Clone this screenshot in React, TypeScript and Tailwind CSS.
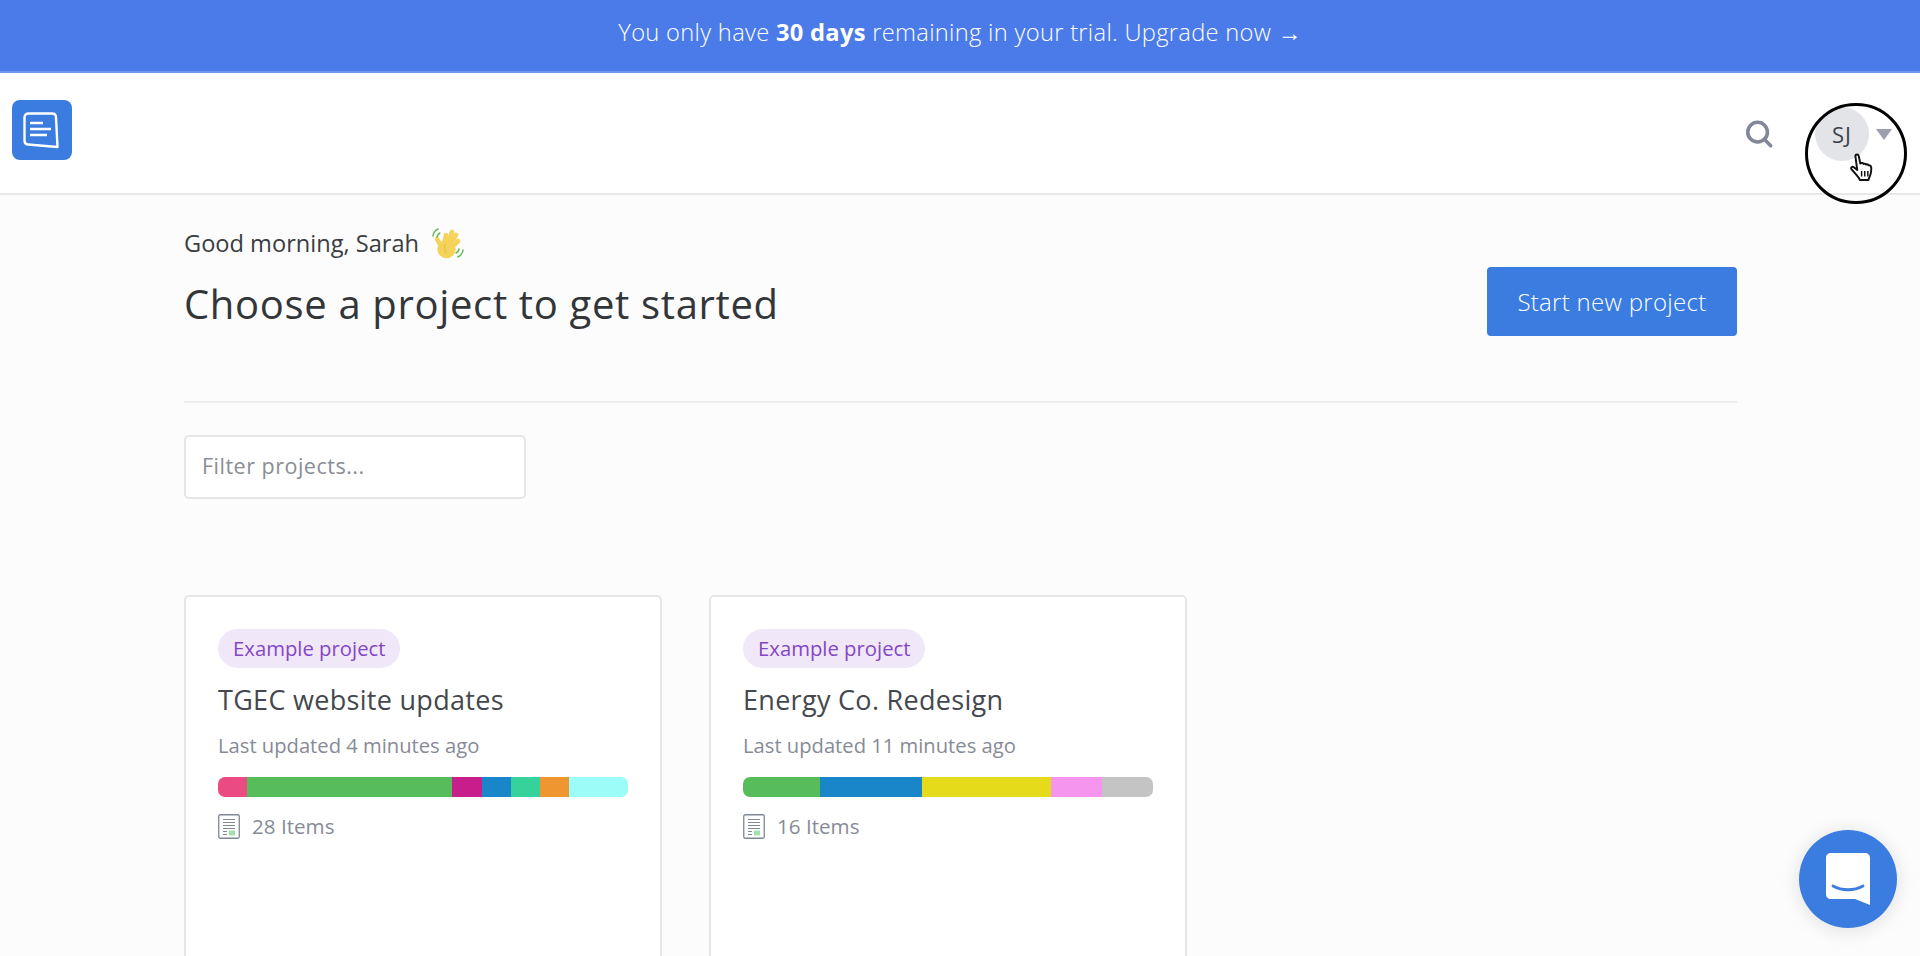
import React from 'react';

const projects = [
  {
    name: 'TGEC website updates',
    updated: 'Last updated 4 minutes ago',
    items: 28,
    segments: [
      { color: 'bg-[#ec4a82]', count: 2 },
      { color: 'bg-[#57bd5a]', count: 14 },
      { color: 'bg-[#c71e8c]', count: 2 },
      { color: 'bg-[#1886c8]', count: 2 },
      { color: 'bg-[#35d39b]', count: 2 },
      { color: 'bg-[#ef9630]', count: 2 },
      { color: 'bg-[#9cfdf8]', count: 4 },
    ],
  },
  {
    name: 'Energy Co. Redesign',
    updated: 'Last updated 11 minutes ago',
    items: 16,
    segments: [
      { color: 'bg-[#57bd5a]', count: 3 },
      { color: 'bg-[#1886c8]', count: 4 },
      { color: 'bg-[#e6db1a]', count: 5 },
      { color: 'bg-[#f595ee]', count: 2 },
      { color: 'bg-[#c4c4c4]', count: 2 },
    ],
  },
];

function Logo() {
  return (
    <div className="flex h-[60px] w-[60px] items-center justify-center rounded-lg bg-[#3b7ce0]">
      <svg width="40" height="40" viewBox="0 0 40 40" fill="none">
        <path
          d="M6 3.500h24c2.500 0 4 1.500 4 4l1.500 29.500-29.500-2.500c-2.200-.2-3.500-1.700-3.500-4v-23c0-2.500 1.500-4 4-4z"
          stroke="#fff"
          strokeWidth="2.400"
          strokeLinejoin="round"
        />
        <path d="M8 13h13M8 19h21M8 25h17" stroke="#fff" strokeWidth="2.600" />
      </svg>
    </div>
  );
}

function WaveEmoji() {
  return (
    <svg width="34" height="34" viewBox="0 0 34 34" fill="none">
      <g stroke="#f5d35a" strokeWidth="4.600" strokeLinecap="round">
        <path d="M11 22l-5-9" />
        <path d="M13 19l2-10" />
        <path d="M16 19l5-13" />
        <path d="M18 20l7-11" />
        <path d="M20 22l7-7" />
      </g>
      <circle cx="15.500" cy="23" r="9.200" fill="#f5d35a" />
      <path d="M14 18c-1 3-.5 6 1 9" stroke="#e8b93f" strokeWidth="1" />
      <path d="M2 10c.3-3 2-5.500 5-7M6 11c.3-1.700 1.200-3 2.800-4" stroke="#6cb85c" strokeWidth="1.600" strokeLinecap="round" />
      <path d="M32 24c-.3 3-2 5.500-5 7M28 23c-.3 1.700-1.200 3-2.800 4" stroke="#6cb85c" strokeWidth="1.600" strokeLinecap="round" />
    </svg>
  );
}

function ItemsIcon() {
  return (
    <svg width="22" height="25" viewBox="0 0 22 25" fill="none">
      <rect x="0.750" y="0.750" width="20.500" height="23.500" rx="1.500" stroke="#7f8795" strokeWidth="1.300" fill="#fff" />
      <path d="M5 5.500h12M5 8.500h12M5 11.500h12M5 14.500h12M5 17.500h4M5 20.500h4" stroke="#7f8795" strokeWidth="1.200" />
      <rect x="11" y="16.500" width="6" height="5" fill="#9fe3ac" />
    </svg>
  );
}

function HandCursor() {
  return (
    <svg width="25" height="29" viewBox="0 0 28 32" fill="#fff" stroke="#111" strokeWidth="2.200" strokeLinejoin="round">
      <path d="M6 3c0-2 3.500-2 3.800 0l1.700 8.500 1.500-.5c1.200-.3 2 .3 2.300 1 .8-.5 2.200-.4 2.700.7.900-.4 2.300-.2 2.800.9 1.200-.3 2.700.3 2.900 2 .3 3-.3 8-1.700 10.900-.6 1.200-1.100 2.500-1.300 3.500H11c-.6-2-2.500-4-4.500-6.500L1.800 18c-1.300-1.700.8-3.600 2.500-2.300l3.800 3z" />
      <path d="M13 20v6M16.500 20v6M20 20v6" strokeWidth="1.600" fill="none" />
    </svg>
  );
}

function ProjectCard({ project }: { project: (typeof projects)[number] }) {
  return (
    <div className="h-[500px] w-[478px] rounded-[5px] border-2 border-[#e6e6e6] bg-white px-[32px] pt-[32px]">
      <span className="inline-flex h-[39px] items-center rounded-full bg-[#f0e8f9] px-[15px] text-[20.300px] text-[#8447c4]">
        Example project
      </span>
      <h2 className="mt-[14px] text-[27px] leading-[36px] tracking-[0.3px] text-[#44484e]">{project.name}</h2>
      <p className="mt-[13px] text-[20.200px] leading-[28px] text-[#868b96]">{project.updated}</p>
      <div className="mt-[18px] flex h-[20px] w-[410px] overflow-hidden rounded-[7px]">
        {project.segments.map((s, i) => (
          <div key={i} className={s.color} style={{ flexGrow: s.count, flexBasis: 0 }} />
        ))}
      </div>
      <div className="mt-[14px] flex items-center gap-[12px] text-[20.600px] text-[#868b96]">
        <ItemsIcon />
        <span>{project.items} Items</span>
      </div>
    </div>
  );
}

export default function App() {
  return (
    <div className="relative h-[956px] overflow-hidden bg-[#fcfcfc] font-['Open_Sans',sans-serif] text-[#333]">
      <div className="flex h-[73px] items-center justify-center border-b-2 border-[#7095ee] bg-[#4b7be8] pb-[6px] text-[23.700px] font-light tracking-[0.3px] text-white">
        <span>
          You only have <strong className="font-bold">30 days</strong> remaining in your trial. Upgrade now →
        </span>
      </div>

      <header className="flex h-[122px] items-start justify-between border-b-2 border-[#e8e8e8] bg-white pl-[12px] pr-[28px] pt-[27px]">
        <Logo />
        <div className="flex items-center gap-[42px] pt-[7px]">
          <svg width="28" height="28" viewBox="0 0 30 30" fill="none" stroke="#7f8798" strokeWidth="3.800" strokeLinecap="round">
            <circle cx="13.500" cy="13" r="10.500" />
            <path d="M21 21l6.500 6.500" />
          </svg>
          <div className="flex items-center gap-[7px]">
            <div className="flex h-[54px] w-[54px] items-center justify-center rounded-full bg-[#e3e4e8] text-[22px] tracking-[1px] text-[#3c4148]">SJ</div>
            <svg width="16" height="11" viewBox="0 0 16 11" fill="#9aa0ad">
              <path d="M0 0h16l-8 11z" />
            </svg>
          </div>
        </div>
      </header>

      <main className="pl-[184px] pr-[183px] pt-[31px]">
        <div className="flex items-start justify-between border-b-2 border-[#ececec] pb-[65px]">
          <div>
            <div className="flex items-center gap-[12px] text-[23.600px] leading-[34px] text-[#3a3d42]">
              <span>Good morning, Sarah</span>
              <WaveEmoji />
            </div>
            <h1 className="mt-[17px] text-[40px] leading-[54px] tracking-[0.66px] text-[#333639]">Choose a project to get started</h1>
          </div>
          <button className="mt-[41px] h-[69px] w-[250px] rounded-[4px] bg-[#3b7ce0] text-[24px] font-light tracking-[0.3px] text-white">Start new project</button>
        </div>

        <input
          placeholder="Filter projects..."
          className="mt-[32px] block h-[64px] w-[342px] rounded-[5px] border-2 border-[#e6e6e6] bg-white pb-[3px] pl-[16px] pr-[16px] text-[21.500px] tracking-[0.5px] placeholder:text-[#8a8d94]"
        />

        <div className="mt-[96px] flex gap-[47px]">
          {projects.map((p) => (
            <ProjectCard key={p.name} project={p} />
          ))}
        </div>
      </main>

      {/* recording highlight + cursor */}
      <div className="absolute left-[1805px] top-[103px] h-[101px] w-[102px] rounded-full border-[3px] border-black" />
      <div className="absolute left-[1850px] top-[153px]">
        <HandCursor />
      </div>

      <div className="absolute left-[1799px] top-[830px] flex h-[98px] w-[98px] items-center justify-center rounded-full bg-[#3b7ce0] shadow-[0_2px_20px_rgba(0,0,0,0.12)]">
        <svg width="46" height="54" viewBox="0 0 46 54" fill="none">
          <path d="M6 1h34c3 0 5 2 5 5v47l-15-6H6c-3 0-5-2-5-5V6c0-3 2-5 5-5z" fill="#fff" />
          <path d="M8 34c9 5 21 5 30 0" stroke="#3b7ce0" strokeWidth="2.800" strokeLinecap="round" />
        </svg>
      </div>
    </div>
  );
}
